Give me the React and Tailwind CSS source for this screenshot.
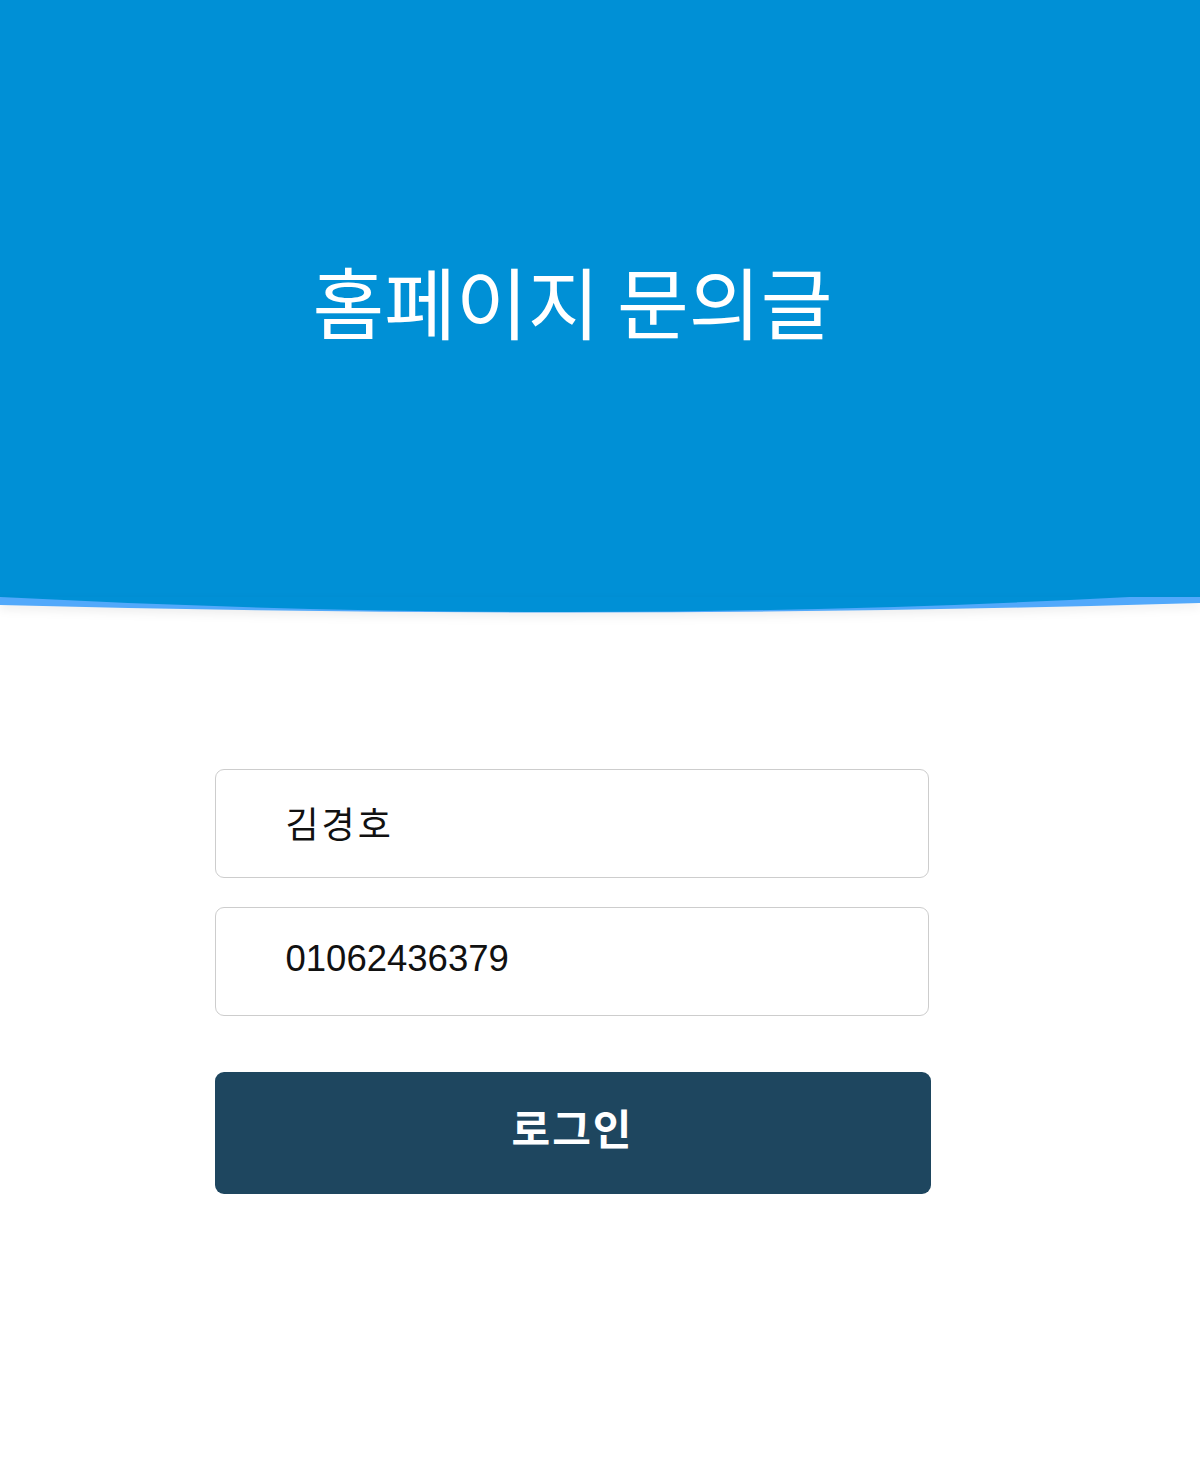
export default function App() {
  return (
    <div className="min-h-[1458px] bg-white" style={{ fontFamily: '"Liberation Sans", "Noto Sans CJK KR", sans-serif' }}>
      <header className="relative">
        <div className="flex h-[597px] w-full bg-[#0090d6]">
          <div className="flex w-[1145px] items-center justify-center pt-[2px]">
            <h1 className="font-['Noto_Sans_CJK_KR',sans-serif] text-[78px] font-normal leading-none text-white">
              홈페이지 문의글
            </h1>
          </div>
        </div>
        <svg
          className="block h-[17px] w-full drop-shadow-[0_4px_5px_rgba(0,0,0,0.07)]"
          viewBox="0 0 1200 17"
          preserveAspectRatio="none"
        >
          <path d="M0 0 L0 8 Q600 24 1200 6 L1200 0 Z" fill="#52a9fb" />
          <path d="M0 0 Q600 32 1200 -4 L1200 0 Z" fill="#0090d6" />
        </svg>
      </header>

      <main className="w-[1145px] pt-[155px]">
        <form className="mx-auto flex w-[716px] flex-col">
          <input
            type="text"
            defaultValue="김경호"
            className="h-[109px] w-[714px] rounded-[9px] border-[1.5px] border-[#cdcdcd] bg-white px-[70px] pb-[4px] text-[36px] tracking-[3px] text-[#111] outline-none"
          />
          <input
            type="text"
            defaultValue="01062436379"
            className="mt-[29px] h-[109px] w-[714px] rounded-[9px] border-[1.5px] border-[#cdcdcd] bg-white px-[70px] pb-[6px] text-[36.5px] text-[#111] outline-none"
          />
          <button
            type="button"
            className="mt-[56px] h-[122px] w-[716px] rounded-[9px] bg-[#1e465f] pb-[14px] font-['Noto_Sans_CJK_KR',sans-serif] text-[42px] font-bold tracking-[2px] text-white"
          >
            로그인
          </button>
        </form>
      </main>
    </div>
  );
}
